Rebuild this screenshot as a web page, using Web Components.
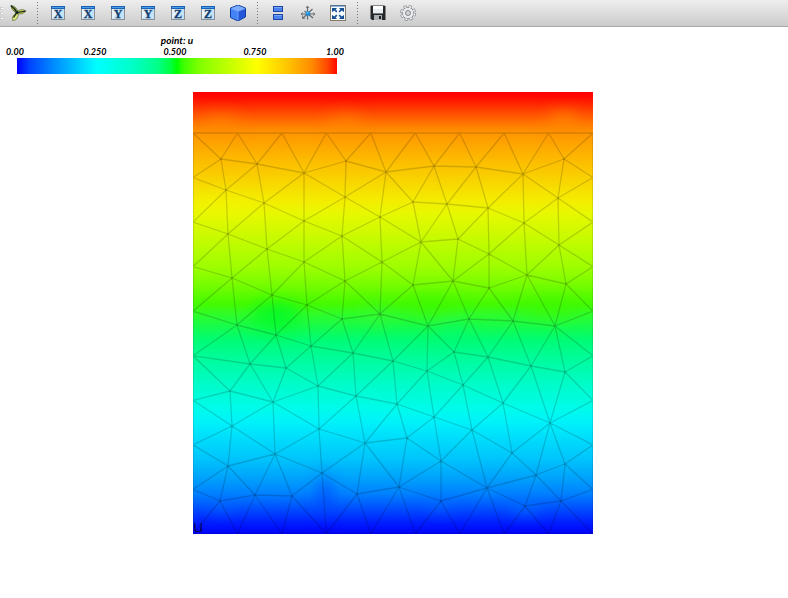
<!DOCTYPE html>
<html lang="en">
<head>
<meta charset="utf-8">
<title>Mesh viewer</title>
<style>
html, body { margin: 0; height: 100%; background: #fff; }
body { font-family: Lato, "Liberation Sans", sans-serif; overflow: hidden; }
</style>
</head>
<body>
<mesh-viewer></mesh-viewer>
<script>
const axisIcon = (letter) => `<svg viewBox="0 0 16 16"><rect x="1.5" y="1.5" width="13" height="13" fill="#e4f3fc" stroke="#8a9098"/><path d="M2 14L14 2V14Z" fill="#c4e3f8"/><path d="M1 1h14v3H1z" fill="#1c62b4"/><path d="M2 2h12v1H2z" fill="#4c9be6"/><text x="8" y="13.3" text-anchor="middle" font-family="Liberation Serif, serif" font-weight="700" font-size="12" fill="#173f70" stroke="#173f70" stroke-width=".3">${letter}</text></svg>`;
const ICONS = {
  x: axisIcon('X'), y: axisIcon('Y'), z: axisIcon('Z'),
  logo: `<svg viewBox="0 0 16 16"><g stroke="#46532c" stroke-width=".6"><path d="M6.400 8.200Q.8 4.600 .8.400Q6.600 1.200 8 6.800Z" fill="#a5b84a"/><path d="M7.200 6.800Q11 2.800 15.800 5.900Q13.500 9.800 7.200 8.800Z" fill="#d3df65"/><path d="M6.300 7.800Q1 11.500 2.800 15.600Q8.300 15.200 8.300 8.300Z" fill="#dce879"/></g><path d="M1 .8Q5.500 4 6.900 7.600L15.500 6.200M6.900 7.600L3.500 12.500" fill="none" stroke="#14251d" stroke-width="1.300"/><circle cx="7" cy="7.600" r="1.400" fill="#14251d"/></svg>`,
  cube: `<svg viewBox="0 0 16 16"><path d="M8 0L15.500 3V12L8 16L.5 12.500V3Z" fill="#356fe8" stroke="#153f9e"/><path d="M1 3.300L8 .6L15 3.300L8 6.200Z" fill="#7dacff"/><path d="M8 6.400L15 3.700V11.800L8 15.400Z" fill="#2458d8"/><path d="M1 3.700L8 6.400V15.400L1 12.200Z" fill="#4383f6"/><path d="M1 3.500L8 6.300L15 3.500M8 6.300V15" fill="none" stroke="#84b0ff" stroke-width=".7"/></svg>`,
  split: `<svg viewBox="0 0 16 16"><g fill="#4b82ef" stroke="#1b43a6"><rect x="3.500" y="1.500" width="9" height="5"/><rect x="3.500" y="9.500" width="9" height="5"/></g><path d="M4 2.500h8M4 10.500h8" stroke="#7ba8ff"/></svg>`,
  axes: `<svg viewBox="0 0 16 16"><path d="M7.500 14.500V1.500M1 9L14.500 9M3 13L12.500 4M4.500 6L13 13" fill="none" stroke="#62696d" stroke-width="1.200"/><path d="M6 3L7.500 1L9 3M3 7.500L1 9L3 10.500M13 7.500L15 9L13 10.500M2.500 11V13.500H5" fill="none" stroke="#62696d" stroke-width=".8"/><circle cx="8" cy="8.500" r="2.300" fill="#1987db"/><circle cx="7.500" cy="7.700" r="1" fill="#52cbff"/></svg>`,
  fit: `<svg viewBox="0 0 16 16"><rect x=".5" y=".5" width="15" height="15" fill="#f4faff" stroke="#847a63"/><path d="M1 1h14" stroke="#2a6abc"/><g fill="#174f91"><path d="M2 3h5L5.600 4.400L7.400 6.200L6.200 7.400L4.400 5.600L2 7Z"/><path d="M14 3H9L10.400 4.400L8.600 6.200L9.800 7.400L11.600 5.600L14 7Z"/><path d="M2 14h5L5.600 12.600L7.400 10.800L6.200 9.600L4.400 11.400L2 10Z"/><path d="M14 14H9L10.400 12.600L8.600 10.800L9.800 9.600L11.600 11.400L14 10Z"/></g></svg>`,
  save: `<svg viewBox="0 0 16 16"><path d="M1 .5H14.500L15.500 1.500V15H2L.5 13.500V1Z" fill="#25272a"/><path d="M3 1h10v7H3z" fill="#e9edef"/><path d="M3 1h10v3H3z" fill="#fff"/><path d="M4 10h8v5H4z" fill="#aaafb2"/><path d="M9 11h2v3H9z" fill="#202225"/><path d="M3 8.500h10" stroke="#74797d"/></svg>`,
  gear: `<svg viewBox="0 0 16 16"><circle cx="8" cy="8" r="6.500" fill="none" stroke="#858990" stroke-width="3" stroke-dasharray="3 2.100"/><circle cx="8" cy="8" r="5.800" fill="#e8eaed" stroke="#858990"/><circle cx="8" cy="8" r="6.500" fill="none" stroke="#eceef0" stroke-width="1.600" stroke-dasharray="2.200 2.900" stroke-dashoffset="-.4"/><circle cx="8" cy="8" r="2.500" fill="#d3d4d6" stroke="#85898f"/></svg>`
};

function define(name, html, setup) {
  customElements.define(name, class extends HTMLElement {
    constructor() {
      super();
      const t = document.createElement('template');
      t.innerHTML = html;
      this.attachShadow({ mode: 'open' }).append(t.content.cloneNode(true));
    }
    connectedCallback() { if (setup) setup(this, this.shadowRoot); }
  });
}

define('tool-button', `<style>
:host { display: block; flex: none; width: 30px; height: 26px; }
button { display: grid; place-items: center; width: 100%; height: 100%; margin: 0; padding: 0; border: 0; background: none; }
svg { display: block; width: 16px; height: 16px; }
</style><button type="button"></button>`, (host, root) => {
  const b = root.querySelector('button');
  b.innerHTML = ICONS[host.getAttribute('icon')];
  b.setAttribute('aria-label', host.getAttribute('label'));
});

define('tool-separator', `<style>
:host { display: flex; flex: none; width: 10px; height: 26px; align-items: center; justify-content: center; }
i { width: 1px; height: 22px; margin-right: 1px; background: repeating-linear-gradient(#777 0 1px, transparent 1px 3px); }
</style><i></i>`);

define('tool-bar', `<style>
:host { display: flex; flex: none; height: 26px; border-bottom: 1px solid #a9a9a9; background: linear-gradient(#eeeeee, #cbcbcb); }
.grip { width: 3px; height: 14px; margin-top: 6px; background: radial-gradient(circle, #fff 0 1px, #ccc 1px 2px, transparent 2px) 0 0 / 4px 5px; }
</style><span class="grip"></span><slot></slot>`);

define('color-legend', `<style>
:host { display: block; width: 50%; max-width: 320px; margin: 7px 0 0 17px; font: italic 700 9px/12px Lato, sans-serif; color: #000; }
.title { text-align: center; font-size: 10px; }
.ticks { display: flex; justify-content: space-between; margin-left: -2px; margin-right: 2px; }
.ticks span { display: flex; justify-content: center; width: 0; white-space: nowrap; }
.bar { height: 16px; background: linear-gradient(90deg, #0000ff, #0044ff 4%, #0090ff 12%, #00ccff 19%, #00ffff 25%, #00ffc8 36%, #00ff88 44%, #00ff40 48%, #00ff00 50%, #3cff00 52%, #80ff00 57%, #baff00 65%, #ffff00 75%, #ffc800 84%, #ff8c00 92%, #ff4800 97%, #ff0800); }
</style><div class="title"><slot></slot></div>
<div class="ticks"><span>0.00</span><span>0.250</span><span>0.500</span><span>0.750</span><span>1.00</span></div><div class="bar"></div>`);

const INNER = [
 [28,66],[64,71],[111,80],[153,68],[193,79],[33,97],[71,110],[152,104],[111,128],[187,124],[35,141],[149,143],
 [241,73],[283,74],[330,81],[371,66],[220,109],[254,111],[295,115],[365,105],[331,130],
 [74,156],[111,169],[39,185],[79,202],[114,212],[189,169],[152,188],[44,232],[83,242],[149,226],[187,221],[118,253],[160,260],[200,268],[57,271],[93,275],[125,293],
 [228,149],[265,146],[296,161],[366,152],[334,182],[220,192],[260,188],[296,195],[373,191],[235,233],[276,226],[320,228],[362,233],[261,259],[295,264],[338,273],[372,279],[234,278],[270,292],
 [37,298],[80,309],[163,303],[39,333],[126,336],[82,361],[172,350],[35,373],[129,380],[27,408],[62,402],[99,403],[164,401],
 [204,311],[241,324],[279,337],[310,310],[357,330],[214,345],[248,368],[319,360],[343,382],[372,371],[206,394],[294,395],[248,408],[332,413],[368,408]
].map(([x, y]) => [x, y + 1]);
const TOP = 41, W = 400, H = 442, N = 9;

function meshNodes() {
  const pts = INNER.slice();
  for (let i = 0; i <= N; i++) pts.push([W * i / N, TOP], [W * i / N, H]);
  for (let i = 1; i < N; i++) {
    const y = TOP + (H - TOP) * i / N;
    pts.push([0, y], [W, y]);
  }
  return pts;
}

/* Bowyer-Watson triangulation; returns the unique edges between nodes. */
function triangulate(pts) {
  const n = pts.length, p = pts.concat([[-90000, -80000], [90500, -80000], [200, 120000]]);
  const make = (a, b, c) => {
    const [ax, ay] = p[a], bx = p[b][0] - ax, by = p[b][1] - ay, cx = p[c][0] - ax, cy = p[c][1] - ay;
    const d = 2 * (bx * cy - by * cx), b2 = bx * bx + by * by, c2 = cx * cx + cy * cy;
    const x = (cy * b2 - by * c2) / d, y = (bx * c2 - cx * b2) / d;
    return { v: [a, b, c], x: x + ax, y: y + ay, r: x * x + y * y };
  };
  let tris = [make(n, n + 1, n + 2)];
  for (let i = 0; i < n; i++) {
    const edges = new Map(), keep = [];
    for (const t of tris) {
      if ((p[i][0] - t.x) ** 2 + (p[i][1] - t.y) ** 2 < t.r) {
        for (let k = 0; k < 3; k++) {
          const e = [t.v[k], t.v[(k + 1) % 3]], key = Math.min(...e) + ',' + Math.max(...e);
          edges.has(key) ? edges.delete(key) : edges.set(key, e);
        }
      } else keep.push(t);
    }
    for (const [a, b] of edges.values()) keep.push(make(a, b, i));
    tris = keep;
  }
  const out = new Set();
  for (const t of tris) for (let k = 0; k < 3; k++) {
    const a = t.v[k], b = t.v[(k + 1) % 3];
    if (a < n && b < n) out.add(Math.min(a, b) + ',' + Math.max(a, b));
  }
  return [...out].map(s => s.split(',').map(Number));
}

const STOPS = [[0,'#ff0000'],[5,'#ff0a00'],[20,'#ff4800'],[32,'#ff7800'],[41,'#ff9600'],[72,'#fcc000'],[108,'#f4ec00'],[121,'#e8f800'],[143,'#ccfa00'],[176,'#9cfe00'],[194,'#74fc00'],[212,'#44fa00'],[222,'#30fc28'],[236,'#14fc50'],[248,'#00fc74'],[267,'#00fc9c'],[292,'#00fcc8'],[317,'#00fbec'],[330,'#00f2fa'],[347,'#00dcfc'],[367,'#00c4fc'],[387,'#00a0fc'],[402,'#0080ff'],[415,'#0054ff'],[430,'#0020ff'],[442,'#0000fa']];

define('mesh-scene', `<style>
:host { display: flex; flex: 1; min-height: 0; justify-content: center; padding: 18px 2px 64px 0; }
svg { display: block; height: 100%; max-width: 100%; }
</style><svg viewBox="0 0 400 442" role="img" aria-label="Scalar field u on a triangular mesh">
<defs><linearGradient id="field" x1="0" y1="0" x2="0" y2="1"></linearGradient>
<clipPath id="domain"><rect width="400" height="442"/></clipPath>
<filter id="soft" x="-1" y="-1" width="3" height="3"><feGaussianBlur stdDeviation="8"/></filter></defs>
<rect width="400" height="442" fill="url(#field)"/>
<g clip-path="url(#domain)"><g filter="url(#soft)">
<ellipse cx="28" cy="31" rx="20" ry="7" fill="#ff8c00" opacity=".6"/><ellipse cx="152" cy="31" rx="18" ry="7" fill="#ff8c00" opacity=".6"/><ellipse cx="371" cy="29" rx="15" ry="9" fill="#ff8c00" opacity=".7"/>
<ellipse cx="83" cy="224" rx="24" ry="14" fill="#00fa28" opacity=".8"/><ellipse cx="238" cy="214" rx="26" ry="10" fill="#3cf800" opacity=".6"/><ellipse cx="358" cy="216" rx="26" ry="10" fill="#3cf800" opacity=".6"/>
<ellipse cx="262" cy="242" rx="16" ry="7" fill="#00fc74" opacity=".6"/><ellipse cx="184" cy="222" rx="16" ry="8" fill="#38fa38" opacity=".6"/>
<ellipse cx="33" cy="112" rx="30" ry="9" fill="#f4fa00" opacity=".5"/>
<ellipse cx="132" cy="404" rx="6" ry="20" fill="#0040ff" opacity=".8"/>
<ellipse cx="30" cy="412" rx="12" ry="5" fill="#0078ff" opacity=".6"/><ellipse cx="248" cy="412" rx="12" ry="5" fill="#0078ff" opacity=".6"/><ellipse cx="332" cy="414" rx="16" ry="6" fill="#0078ff" opacity=".8"/>
</g></g>
<path id="edges" fill="none" stroke="#000" stroke-opacity=".16" stroke-width="1.300"/>
<g id="nodes" fill="#000" fill-opacity=".22"></g>
<text x="0" y="440" font-family="Open Sans, sans-serif" font-weight="300" font-size="17">u</text></svg>`, (host, root) => {
  root.querySelector('#field').innerHTML = STOPS.map(([y, c]) => `<stop offset="${y / H}" stop-color="${c}"/>`).join('');
  const pts = meshNodes();
  root.querySelector('#edges').setAttribute('d', triangulate(pts).map(([a, b]) => `M${pts[a]}L${pts[b]}`).join(''));
  root.querySelector('#nodes').innerHTML = INNER.map(([x, y]) => `<circle cx="${x}" cy="${y}" r="1"/>`).join('');
});

define('mesh-viewer', `<style>
:host { display: flex; flex-direction: column; height: 100vh; }
</style>
<tool-bar role="toolbar">
<tool-button icon="logo" label="Pipeline"></tool-button><tool-separator></tool-separator>
<tool-button icon="x" label="View along -X"></tool-button><tool-button icon="x" label="View along +X"></tool-button>
<tool-button icon="y" label="View along -Y"></tool-button><tool-button icon="y" label="View along +Y"></tool-button>
<tool-button icon="z" label="View along -Z"></tool-button><tool-button icon="z" label="View along +Z"></tool-button>
<tool-button icon="cube" label="Isometric view"></tool-button><tool-separator></tool-separator>
<tool-button icon="split" label="Parallel projection"></tool-button><tool-button icon="axes" label="Axes indicator"></tool-button><tool-button icon="fit" label="Full screen"></tool-button><tool-separator></tool-separator>
<tool-button icon="save" label="Save scene"></tool-button><tool-button icon="gear" label="Configure scene"></tool-button>
</tool-bar>
<color-legend>point: u</color-legend>
<mesh-scene></mesh-scene>`);
</script>
</body>
</html>
